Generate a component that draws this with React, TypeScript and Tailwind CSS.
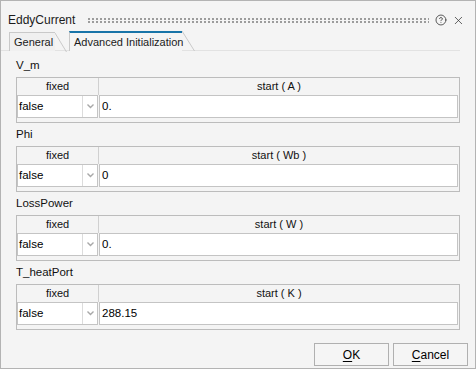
import { CircleHelp, X } from "lucide-react";

const sections = [
  { label: "V_m", unit: "A", value: "0." },
  { label: "Phi", unit: "Wb", value: "0" },
  { label: "LossPower", unit: "W", value: "0." },
  { label: "T_heatPort", unit: "K", value: "288.15" },
];

function Grip() {
  return (
    <svg width="343" height="5" className="block">
      <defs>
        <pattern id="dots" width="4" height="3" patternUnits="userSpaceOnUse">
          <rect x="0" y="0" width="2" height="2" fill="#9c9c9c" />
        </pattern>
      </defs>
      <rect width="343" height="5" fill="url(#dots)" />
    </svg>
  );
}

function Slant() {
  return (
    <svg width="12" height="20" className="block shrink-0">
      <line x1="0" y1="1" x2="11.5" y2="20" stroke="#c9c9c9" strokeWidth="1" />
    </svg>
  );
}

function ParamTable({ unit, value }: { unit: string; value: string }) {
  return (
    <div className="border border-[#bcbcbc] bg-[#f4f4f4] w-[444px]">
      {/* header */}
      <div className="flex h-[17px] items-center text-[11px] text-[#111]">
        <div className="w-[82px] h-full border-r border-[#d0d0d0] flex items-center justify-center">
          fixed
        </div>
        <div className="flex-1 flex items-center justify-center">start ( {unit} )</div>
      </div>
      {/* row */}
      <div className="flex h-[23px] gap-[1px] pr-[1px]">
        <div className="w-[81px] border border-[#c4c4c4] bg-white flex">
          <div className="flex-1 flex items-center pl-[1px] text-[11.5px] text-black">false</div>
          <div className="w-[15px] border-l border-[#dcdcdc] flex items-center justify-center">
            <svg width="7" height="5">
              <path d="M0.5 0.5 L3.5 3.5 L6.5 0.5" stroke="#a8a8a8" strokeWidth="1.4" fill="none" />
            </svg>
          </div>
        </div>
        <div className="flex-1 border border-[#c4c4c4] bg-white flex items-center pl-[2px] text-[11.5px] text-black">
          {value}
        </div>
      </div>
      <div className="h-[4px]" />
    </div>
  );
}

export default function App() {
  return (
    <div
      className="w-[476px] h-[369px] bg-[#f4f4f4] border border-[#b3b3b3] flex flex-col text-[#1b1b1b]"
      style={{ fontFamily: '"Liberation Sans", Arial, sans-serif' }}
    >
      {/* Title bar */}
      <div className="h-[30px] flex items-center pl-[7px] pr-[10px] pt-[8px]">
        <span className="text-[12px] w-[81px]">EddyCurrent</span>
        <Grip />
        <CircleHelp size={12} strokeWidth={1.6} className="ml-[6px] text-[#333]" />
        <X size={13} strokeWidth={1.4} className="ml-[5px] text-[#333]" />
      </div>

      {/* Tabs */}
      <div className="h-[20px] flex items-end pl-[8px] border-b border-[#e2e2e2] mr-[15px]">
        <div className="flex h-[19px] -mb-px">
          <div className="border-l border-t border-[#c9c9c9] bg-[#f0f0f0] flex items-center pl-[4px] pr-[4px] w-[46px] text-[11px]">
            General
          </div>
          <Slant />
        </div>
        <div className="flex h-[20px] -mb-px ml-[2px]">
          <div className="border-l border-[#c9c9c9] border-t-2 border-t-[#1874a8] bg-[#f4f4f4] flex items-center pl-[4px] w-[113px] text-[11px] whitespace-nowrap">
            Advanced Initialization
          </div>
          <svg width="13" height="20" className="block shrink-0">
            <line x1="0" y1="0" x2="12.5" y2="20" stroke="#c9c9c9" strokeWidth="1" />
          </svg>
        </div>
      </div>

      {/* Content */}
      <div className="flex flex-col pl-[15px] pt-[5px]">
        {sections.map((s) => (
          <div key={s.label} className="flex flex-col mb-[2px]">
            <div className="h-[20px] flex items-center text-[11.5px] text-[#111]">{s.label}</div>
            <div className="mt-[1px]">
              <ParamTable unit={s.unit} value={s.value} />
            </div>
          </div>
        ))}
      </div>

      {/* Buttons */}
      <div className="mt-auto mb-[2px] flex justify-end gap-[4px] pr-[7px]">
        <button className="w-[75px] h-[23px] border border-[#b0b0b0] bg-[#f5f5f5] text-[12px] text-black">
          <span className="underline underline-offset-2">O</span>K
        </button>
        <button className="w-[75px] h-[23px] border border-[#b0b0b0] bg-[#f5f5f5] text-[12px] text-black">
          <span className="underline underline-offset-2">C</span>ancel
        </button>
      </div>
    </div>
  );
}
